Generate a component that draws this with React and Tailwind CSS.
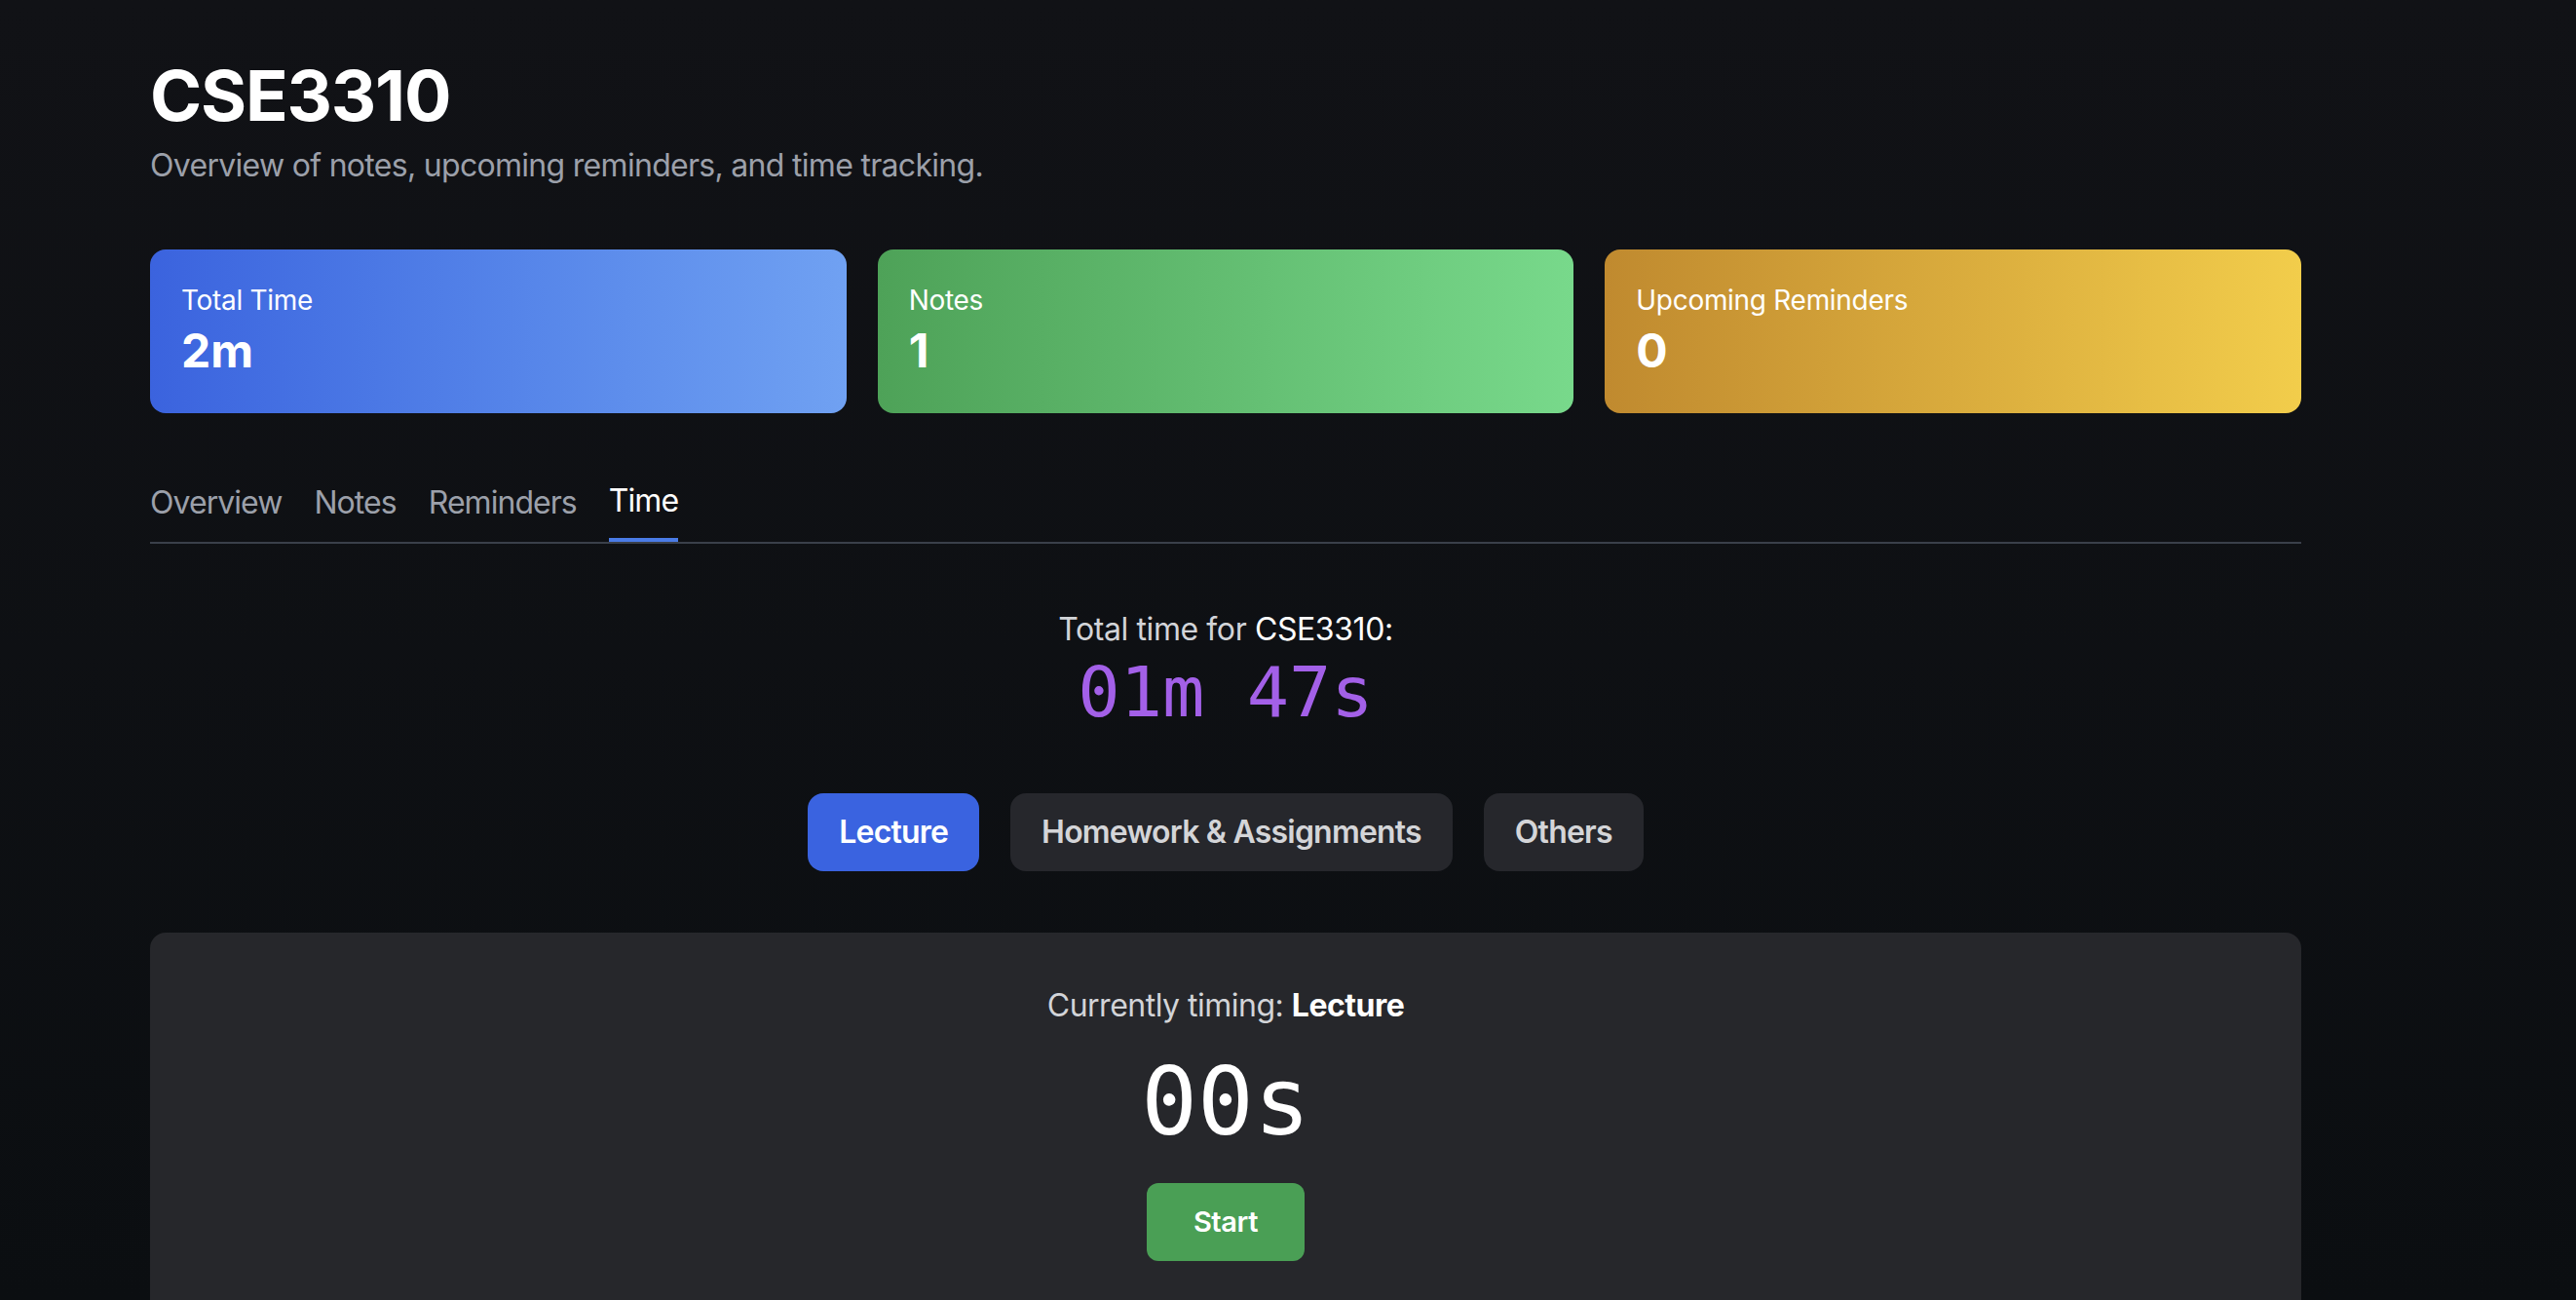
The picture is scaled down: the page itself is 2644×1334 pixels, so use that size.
import React from "react";

const sans = { fontFamily: "Inter, 'Liberation Sans', sans-serif" };

function StatCard({ label, value, gradient }) {
  return (
    <div className={`rounded-[16px] p-8 text-white ${gradient}`}>
      <div className="text-[28px] leading-[40px] tracking-[-0.3px]">{label}</div>
      <div className="text-[48px] leading-[64px] font-bold">{value}</div>
    </div>
  );
}

export default function App() {
  const tabs = ["Overview", "Notes", "Reminders", "Time"];
  return (
    <div
      className="min-h-screen w-full bg-linear-to-b from-[#111216] to-[#0b0e11] overflow-hidden"
      style={sans}
    >
      <div className="ml-[154px] w-[2208px] pt-[58px] h-[1334px]">
        <h1 className="text-[72px] leading-[80px] font-bold text-white tracking-[-1.2px]">
          CSE3310
        </h1>
        <p className="mt-2 text-[32px] leading-[48px] text-[#9ca0aa] tracking-[-0.7px]">
          Overview of notes, upcoming reminders, and time tracking.
        </p>

        <div className="mt-[62px] grid grid-cols-3 gap-8">
          <StatCard
            label="Total Time"
            value="2m"
            gradient="bg-linear-to-r from-[#3b63de] to-[#70a1f2]"
          />
          <StatCard
            label="Notes"
            value="1"
            gradient="bg-linear-to-r from-[#4ea258] to-[#78d98b]"
          />
          <StatCard
            label="Upcoming Reminders"
            value="0"
            gradient="bg-linear-to-r from-[#c08a2f] to-[#f2cd4b]"
          />
        </div>

        <div className="mt-[68px] flex gap-[33px] border-b-2 border-[#3a3f4a]">
          {tabs.map((t) => {
            const active = t === "Time";
            return (
              <div
                key={t}
                className={`pb-[12px] border-b-4 text-[32px] leading-[48px] tracking-[-0.95px] ${
                  active
                    ? "border-[#4a7be6] text-white -mt-[2px] pt-0"
                    : "border-transparent text-[#9ca0aa]"
                }`}
              >
                {t}
              </div>
            );
          })}
        </div>

        <div className="mt-[64px] flex flex-col items-center">
          <div className="text-[32px] leading-[48px] tracking-[-0.4px]">
            <span className="text-[#d2d4d8]">Total time for </span>
            <span className="text-white">CSE3310:</span>
          </div>
          <div
            className="text-[72px] leading-[80px] text-[#a360e8]"
            style={{ fontFamily: "'DejaVu Sans Mono', 'Liberation Mono', monospace" }}
          >
            01m 47s
          </div>

          <div className="mt-[64px] flex gap-8">
            <button className="rounded-[16px] bg-[#3a63e0] px-8 py-4 text-[32px] leading-[48px] font-semibold text-white tracking-[-0.8px]">
              Lecture
            </button>
            <button className="rounded-[16px] bg-[#26272c] px-8 py-4 text-[32px] leading-[48px] font-semibold text-[#d4d5d8] tracking-[-0.8px]">
              Homework &amp; Assignments
            </button>
            <button className="rounded-[16px] bg-[#26272c] px-8 py-4 text-[32px] leading-[48px] font-semibold text-[#d4d5d8] tracking-[-0.8px]">
              Others
            </button>
          </div>
        </div>

        <div className="mt-[63px] rounded-[16px] bg-[#26272b] pt-[51px] pb-16 flex flex-col items-center">
          <div className="text-[32px] leading-[48px] tracking-[-0.5px]">
            <span className="text-[#d2d4d8]">Currently timing: </span>
            <span className="text-white font-bold">Lecture</span>
          </div>
          <div
            className="mt-[27px] text-[96px] leading-[96px] text-white"
            style={{ fontFamily: "'DejaVu Sans Mono', 'Liberation Mono', monospace" }}
          >
            00s
          </div>
          <button className="mt-[35px] rounded-[12px] bg-[#4a9f55] px-12 py-4 text-[29px] leading-[48px] font-semibold text-white tracking-[-0.4px]">
            Start
          </button>
        </div>
      </div>
    </div>
  );
}
